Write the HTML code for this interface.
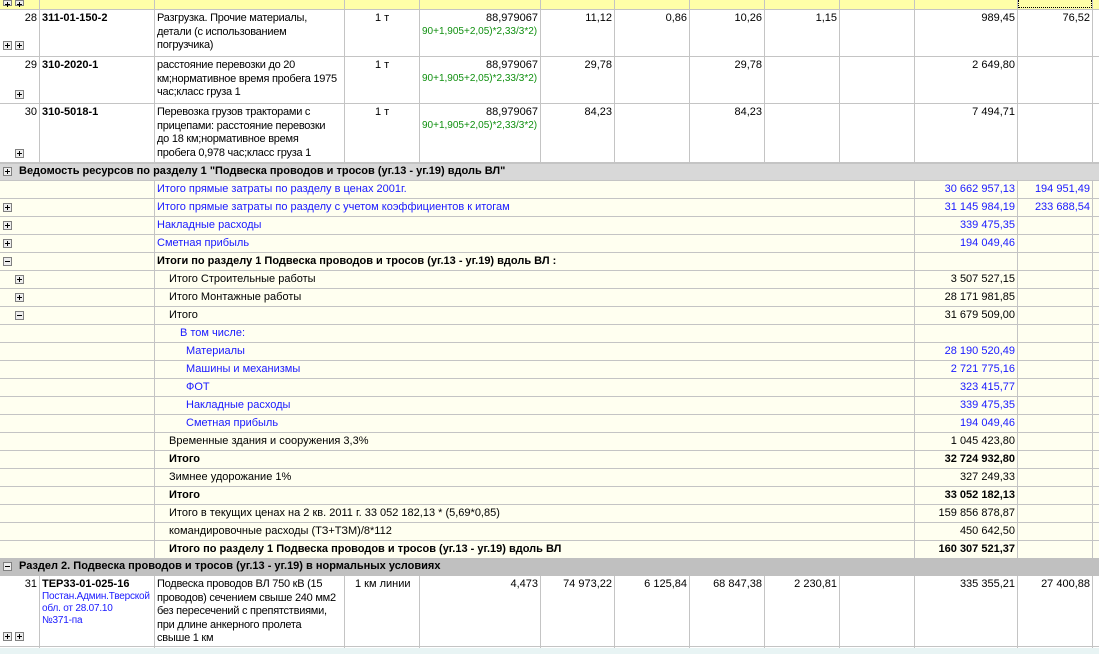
<!DOCTYPE html>
<html><head><meta charset="utf-8">
<style>
*{margin:0;padding:0;box-sizing:border-box}
body{width:1099px;height:654px;overflow:hidden;background:#fff;font-family:"Liberation Sans","DejaVu Sans",sans-serif;font-size:11px;color:#000;position:relative}
.a{position:absolute;white-space:nowrap}
.r{position:absolute;left:0;width:1099px;border-bottom:1px solid #c4c4c4}
.v{position:absolute;width:1px;background:#c4c4c4}
.rt{text-align:right}
.b{font-weight:bold}
.bl{color:#1a1aff}
.g{color:#109010;font-size:10px}
.ic{position:absolute;width:9px;height:9px;border:1px solid #808080;background:#eee;}
.ic:before{content:"";position:absolute;left:1px;top:3px;width:5px;height:1px;background:#000}
.p:after{content:"";position:absolute;left:3px;top:1px;width:1px;height:5px;background:#000}
.t{line-height:13.5px;letter-spacing:-0.25px}
</style></head><body>
<div class="r" style="top:0;height:10px;background:#ffffa8"></div>
<div class="a" style="left:1018px;top:0;width:74px;height:8px;border:1px dotted #000;border-top:none"></div>
<div class="ic p" style="left:3px;top:0px;height:6px"></div><div class="ic p" style="left:15px;top:0px;height:6px"></div>
<div class="r" style="top:10px;height:47px"></div>
<div class="r" style="top:57px;height:47px"></div>
<div class="r" style="top:104px;height:59px"></div>
<div class="v" style="left:39px;top:0;height:163px"></div>
<div class="v" style="left:154px;top:0;height:163px"></div>
<div class="v" style="left:344px;top:0;height:163px"></div>
<div class="v" style="left:419px;top:0;height:163px"></div>
<div class="v" style="left:540px;top:0;height:163px"></div>
<div class="v" style="left:614px;top:0;height:163px"></div>
<div class="v" style="left:689px;top:0;height:163px"></div>
<div class="v" style="left:764px;top:0;height:163px"></div>
<div class="v" style="left:839px;top:0;height:163px"></div>
<div class="v" style="left:914px;top:0;height:163px"></div>
<div class="v" style="left:1017px;top:0;height:163px"></div>
<div class="v" style="left:1092px;top:0;height:163px"></div>

<div class="a rt" style="left:0;width:37px;top:12px">28</div>
<div class="a b" style="left:42px;top:12px">311-01-150-2</div>
<div class="a t" style="left:157px;top:12px">Разгрузка. Прочие материалы,<br>детали (с использованием<br>погрузчика)</div>
<div class="a" style="left:375px;top:12px">1 т</div>
<div class="a rt" style="left:420px;width:118px;top:12px">88,979067</div>
<div class="a g" style="left:422px;top:26px">90+1,905+2,05)*2,33/3*2)</div>
<div class="a rt" style="left:540px;width:72px;top:12px">11,12</div>
<div class="a rt" style="left:614px;width:73px;top:12px">0,86</div>
<div class="a rt" style="left:689px;width:73px;top:12px">10,26</div>
<div class="a rt" style="left:764px;width:73px;top:12px">1,15</div>
<div class="a rt" style="left:914px;width:101px;top:12px">989,45</div>
<div class="a rt" style="left:1017px;width:73px;top:12px">76,52</div>
<div class="ic p" style="left:3px;top:41px"></div><div class="ic p" style="left:15px;top:41px"></div>
<div class="a rt" style="left:0;width:37px;top:59px">29</div>
<div class="a b" style="left:42px;top:59px">310-2020-1</div>
<div class="a t" style="left:157px;top:59px">расстояние перевозки до 20<br>км;нормативное время пробега 1975<br>час;класс груза 1</div>
<div class="a" style="left:375px;top:59px">1 т</div>
<div class="a rt" style="left:420px;width:118px;top:59px">88,979067</div>
<div class="a g" style="left:422px;top:73px">90+1,905+2,05)*2,33/3*2)</div>
<div class="a rt" style="left:540px;width:72px;top:59px">29,78</div>
<div class="a rt" style="left:689px;width:73px;top:59px">29,78</div>
<div class="a rt" style="left:914px;width:101px;top:59px">2 649,80</div>
<div class="ic p" style="left:15px;top:90px"></div>
<div class="a rt" style="left:0;width:37px;top:106px">30</div>
<div class="a b" style="left:42px;top:106px">310-5018-1</div>
<div class="a t" style="left:157px;top:106px">Перевозка грузов тракторами с<br>прицепами: расстояние перевозки<br>до 18 км;нормативное время<br>пробега 0,978 час;класс груза 1</div>
<div class="a" style="left:375px;top:106px">1 т</div>
<div class="a rt" style="left:420px;width:118px;top:106px">88,979067</div>
<div class="a g" style="left:422px;top:120px">90+1,905+2,05)*2,33/3*2)</div>
<div class="a rt" style="left:540px;width:72px;top:106px">84,23</div>
<div class="a rt" style="left:689px;width:73px;top:106px">84,23</div>
<div class="a rt" style="left:914px;width:101px;top:106px">7 494,71</div>
<div class="ic p" style="left:15px;top:149px"></div>

<div class="r" style="top:163px;height:18px;background:#d8d8d8;border-top:1px solid #c4c4c4"></div>
<div class="ic p" style="left:3px;top:167px"></div>
<div class="a b" style="left:19px;top:165px">Ведомость ресурсов по разделу 1 "Подвеска проводов и тросов (уг.13 - уг.19) вдоль ВЛ"</div>

<div style="position:absolute;left:0;top:181px;width:1099px;height:377px;background:#fffff0"></div>
<div class="r" style="top:181px;height:18px"></div>
<div class="r" style="top:199px;height:18px"></div>
<div class="r" style="top:217px;height:18px"></div>
<div class="r" style="top:235px;height:18px"></div>
<div class="r" style="top:253px;height:18px"></div>
<div class="r" style="top:271px;height:18px"></div>
<div class="r" style="top:289px;height:18px"></div>
<div class="r" style="top:307px;height:18px"></div>
<div class="r" style="top:325px;height:18px"></div>
<div class="r" style="top:343px;height:18px"></div>
<div class="r" style="top:361px;height:18px"></div>
<div class="r" style="top:379px;height:18px"></div>
<div class="r" style="top:397px;height:18px"></div>
<div class="r" style="top:415px;height:18px"></div>
<div class="r" style="top:433px;height:18px"></div>
<div class="r" style="top:451px;height:18px"></div>
<div class="r" style="top:469px;height:18px"></div>
<div class="r" style="top:487px;height:18px"></div>
<div class="r" style="top:505px;height:18px"></div>
<div class="r" style="top:523px;height:18px"></div>
<div class="r" style="top:541px;height:17px;border-bottom:none"></div>
<div class="v" style="left:154px;top:181px;height:377px"></div>
<div class="v" style="left:914px;top:181px;height:377px"></div>
<div class="v" style="left:1017px;top:181px;height:377px"></div>
<div class="v" style="left:1092px;top:181px;height:377px"></div>

<div class="a bl" style="left:157px;top:183px">Итого прямые затраты по разделу в ценах 2001г.</div>
<div class="a bl rt" style="left:914px;width:101px;top:183px">30 662 957,13</div>
<div class="a bl rt" style="left:1017px;width:73px;top:183px">194 951,49</div>
<div class="ic p" style="left:3px;top:203px"></div>
<div class="a bl" style="left:157px;top:201px">Итого прямые затраты по разделу с учетом коэффициентов к итогам</div>
<div class="a bl rt" style="left:914px;width:101px;top:201px">31 145 984,19</div>
<div class="a bl rt" style="left:1017px;width:73px;top:201px">233 688,54</div>
<div class="ic p" style="left:3px;top:221px"></div>
<div class="a bl" style="left:157px;top:219px">Накладные расходы</div>
<div class="a bl rt" style="left:914px;width:101px;top:219px">339 475,35</div>
<div class="ic p" style="left:3px;top:239px"></div>
<div class="a bl" style="left:157px;top:237px">Сметная прибыль</div>
<div class="a bl rt" style="left:914px;width:101px;top:237px">194 049,46</div>
<div class="ic" style="left:3px;top:257px"></div>
<div class="a b" style="left:157px;top:255px">Итоги по разделу 1 Подвеска проводов и тросов (уг.13 - уг.19) вдоль ВЛ :</div>
<div class="ic p" style="left:15px;top:275px"></div>
<div class="a" style="left:169px;top:273px">Итого Строительные работы</div>
<div class="a rt" style="left:914px;width:101px;top:273px">3 507 527,15</div>
<div class="ic p" style="left:15px;top:293px"></div>
<div class="a" style="left:169px;top:291px">Итого Монтажные работы</div>
<div class="a rt" style="left:914px;width:101px;top:291px">28 171 981,85</div>
<div class="ic" style="left:15px;top:311px"></div>
<div class="a" style="left:169px;top:309px">Итого</div>
<div class="a rt" style="left:914px;width:101px;top:309px">31 679 509,00</div>
<div class="a bl" style="left:180px;top:327px">В том числе:</div>
<div class="a bl" style="left:186px;top:345px">Материалы</div>
<div class="a bl rt" style="left:914px;width:101px;top:345px">28 190 520,49</div>
<div class="a bl" style="left:186px;top:363px">Машины и механизмы</div>
<div class="a bl rt" style="left:914px;width:101px;top:363px">2 721 775,16</div>
<div class="a bl" style="left:186px;top:381px">ФОТ</div>
<div class="a bl rt" style="left:914px;width:101px;top:381px">323 415,77</div>
<div class="a bl" style="left:186px;top:399px">Накладные расходы</div>
<div class="a bl rt" style="left:914px;width:101px;top:399px">339 475,35</div>
<div class="a bl" style="left:186px;top:417px">Сметная прибыль</div>
<div class="a bl rt" style="left:914px;width:101px;top:417px">194 049,46</div>
<div class="a" style="left:169px;top:435px">Временные здания и сооружения 3,3%</div>
<div class="a rt" style="left:914px;width:101px;top:435px">1 045 423,80</div>
<div class="a b" style="left:169px;top:453px">Итого</div>
<div class="a b rt" style="left:914px;width:101px;top:453px">32 724 932,80</div>
<div class="a" style="left:169px;top:471px">Зимнее удорожание 1%</div>
<div class="a rt" style="left:914px;width:101px;top:471px">327 249,33</div>
<div class="a b" style="left:169px;top:489px">Итого</div>
<div class="a b rt" style="left:914px;width:101px;top:489px">33 052 182,13</div>
<div class="a" style="left:169px;top:507px">Итого в текущих ценах на 2 кв. 2011 г. 33 052 182,13 * (5,69*0,85)</div>
<div class="a rt" style="left:914px;width:101px;top:507px">159 856 878,87</div>
<div class="a" style="left:169px;top:525px">командировочные расходы (ТЗ+ТЗМ)/8*112</div>
<div class="a rt" style="left:914px;width:101px;top:525px">450 642,50</div>
<div class="a b" style="left:169px;top:543px">Итого по разделу 1 Подвеска проводов и тросов (уг.13 - уг.19) вдоль ВЛ</div>
<div class="a b rt" style="left:914px;width:101px;top:543px">160 307 521,37</div>

<div class="r" style="top:558px;height:18px;background:#c0c0c0;border-bottom:none"></div>
<div class="ic" style="left:3px;top:562px"></div>
<div class="a b" style="left:19px;top:560px">Раздел 2. Подвеска проводов и тросов (уг.13 - уг.19) в нормальных условиях</div>

<div class="r" style="top:576px;height:71px"></div>
<div class="v" style="left:39px;top:576px;height:78px"></div>
<div class="v" style="left:154px;top:576px;height:78px"></div>
<div class="v" style="left:344px;top:576px;height:78px"></div>
<div class="v" style="left:419px;top:576px;height:78px"></div>
<div class="v" style="left:540px;top:576px;height:78px"></div>
<div class="v" style="left:614px;top:576px;height:78px"></div>
<div class="v" style="left:689px;top:576px;height:78px"></div>
<div class="v" style="left:764px;top:576px;height:78px"></div>
<div class="v" style="left:839px;top:576px;height:78px"></div>
<div class="v" style="left:914px;top:576px;height:78px"></div>
<div class="v" style="left:1017px;top:576px;height:78px"></div>
<div class="v" style="left:1092px;top:576px;height:78px"></div>
<div class="a rt" style="left:0;width:37px;top:578px">31</div>
<div class="a b" style="left:42px;top:578px">ТЕР33-01-025-16</div>
<div class="a bl" style="left:42px;top:591px;font-size:10px;line-height:12px;letter-spacing:-0.2px">Постан.Админ.Тверской<br>обл. от 28.07.10<br>№371-па</div>
<div class="a t" style="left:157px;top:578px">Подвеска проводов ВЛ 750 кВ (15<br>проводов) сечением свыше 240 мм2<br>без пересечений с препятствиями,<br>при длине анкерного пролета<br>свыше 1 км</div>
<div class="a" style="left:355px;top:578px">1 км линии</div>
<div class="a rt" style="left:420px;width:118px;top:578px">4,473</div>
<div class="a rt" style="left:540px;width:72px;top:578px">74 973,22</div>
<div class="a rt" style="left:614px;width:73px;top:578px">6 125,84</div>
<div class="a rt" style="left:689px;width:73px;top:578px">68 847,38</div>
<div class="a rt" style="left:764px;width:73px;top:578px">2 230,81</div>
<div class="a rt" style="left:914px;width:101px;top:578px">335 355,21</div>
<div class="a rt" style="left:1017px;width:73px;top:578px">27 400,88</div>
<div class="ic p" style="left:3px;top:632px"></div><div class="ic p" style="left:15px;top:632px"></div>
<div style="position:absolute;left:0;top:648px;width:1099px;height:6px;background:#e8f4f4"></div>
</body></html>
